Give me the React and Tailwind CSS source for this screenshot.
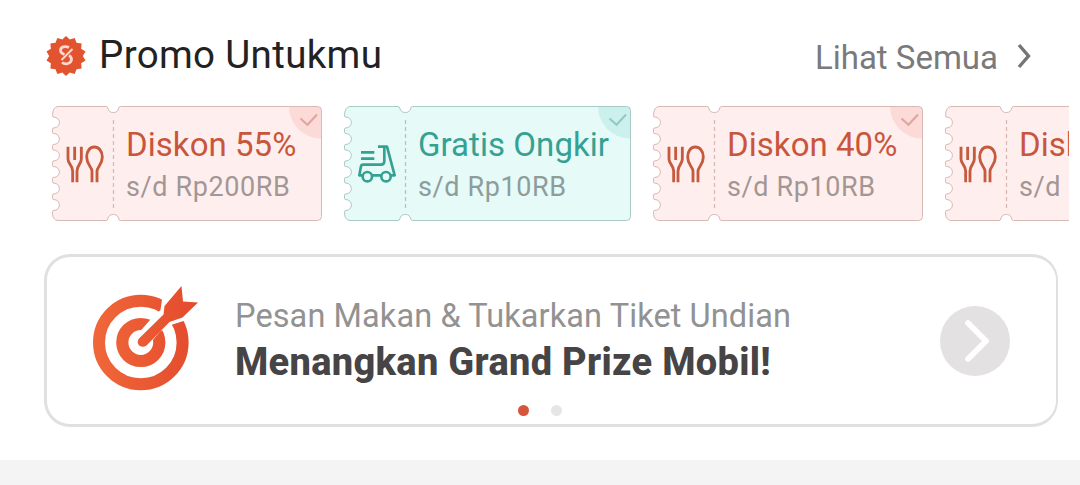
// src/pages/PromoSection.jsx

const vouchers = [
  { id: 1, type: 'food', title: 'Diskon 55%', subtitle: 's/d Rp200RB', width: 270 },
  { id: 2, type: 'delivery', title: 'Gratis Ongkir', subtitle: 's/d Rp10RB', width: 287 },
  { id: 3, type: 'food', title: 'Diskon 40%', subtitle: 's/d Rp10RB', width: 270 },
  { id: 4, type: 'food', title: 'Diskon 40%', subtitle: 's/d Rp10RB', width: 270 },
];

const themes = {
  food: { fill: '#feefee', border: '#d8b9b4', badge: '#fcdad7', check: '#dfa59f', title: 'text-[#c9563c]', subtitle: 'text-[#a39695]' },
  delivery: { fill: '#e6faf8', border: '#a9cbc7', badge: '#ccf0ed', check: '#93c9c3', title: 'text-[#35a193]', subtitle: 'text-[#8d9d9b]' },
};

// Ticket outline: scalloped left edge plus a notch at each end of the perforation
function ticketPath(width) {
  const r = width - 0.5;
  const bites = [99, 82.5, 66, 49.5, 33, 16.5]
    .map((y) => `V${y + 6.6} Q0.5 ${y + 5.4} 2 ${y + 5.4} A5.3 5.3 0 0 0 2 ${y - 5.4} Q0.5 ${y - 5.4} 0.5 ${y - 6.6}`)
    .join(' ');
  return `M6 0.5 H54 Q55.5 0.5 55.8 2 A5.6 5.6 0 0 0 66.8 2 Q67 0.5 68.5 0.5 H${r - 4} Q${r} 0.5 ${r} 4.5 V110.5 Q${r} 114.5 ${r - 4} 114.5 H68.5 Q67 114.5 66.8 113 A5.6 5.6 0 0 0 55.8 113 Q55.5 114.5 54 114.5 H6 Q0.5 114 0.5 107 ${bites} Q0.5 1 6 0.5 Z`;
}

function PromoBadge() {
  const points = Array.from({ length: 28 }, (_, i) => {
    const radius = i % 2 === 0 ? 20 : 16.8;
    const angle = (i * Math.PI) / 14 - Math.PI / 2;
    return `${20 + radius * Math.cos(angle)},${20 + radius * Math.sin(angle)}`;
  }).join(' ');
  return (
    <svg width="40" height="40" viewBox="0 0 40 40" fill="none">
      <polygon points={points} fill="#e2532f" />
      <path d="M23 11.5C19 9.5 14.5 11 14.5 14.5C14.5 16.5 16 17.5 18.5 18.5M23 19.5C25.5 21 25.8 23.5 24.8 25.5C23 28.5 18.5 28.5 16 26.5" stroke="#ffd9cf" strokeWidth="2.8" />
      <path d="M26.5 13L15.5 24" stroke="#ffd9cf" strokeWidth="2" />
    </svg>
  );
}

function CutleryIcon() {
  return (
    <svg width="38" height="38" viewBox="77 146 114 114" fill="none" stroke="#c65a3f" strokeWidth="8.5">
      <path d="M83 151V188C83 204 97 206 97 224V258M123 151V188C123 204 110 206 110 224V258M103 151V191" />
      <path d="M155 258V224C155 212 139 206 139 182C139 164 149 152 162 152S186 164 186 182C186 206 170 212 170 224V258" />
    </svg>
  );
}

function ScooterIcon() {
  return (
    <svg width="38" height="38" viewBox="66 146 114 114" fill="none" stroke="#35a193" strokeWidth="8">
      <path d="M75 168H115M75 187H115" />
      <path d="M126 151H153L176 237H165M145 151V195Q145 205 135 205H81Q76 205 75 210L70 237H79M109 237H135" strokeLinejoin="round" />
      <circle cx="94" cy="241" r="14" />
      <circle cx="150" cy="241" r="14" />
    </svg>
  );
}

function VoucherCard({ voucher }) {
  const theme = themes[voucher.type];
  const w = voucher.width;
  return (
    <div className="relative flex h-[115px] shrink-0" style={{ width: w }}>
      <svg className="absolute inset-0" width={w} height="115" viewBox={`0 0 ${w} 115`} fill="none">
        <path d={ticketPath(w)} fill={theme.fill} />
        <path d={`M${w - 33} 0.5 A32 32 0 0 0 ${w - 0.5} 32.5 V4.5 Q${w - 0.5} 0.5 ${w - 4.5} 0.5 Z`} fill={theme.badge} />
        <path d={ticketPath(w)} stroke={theme.border} />
        <path d="M61.5 14V102" stroke={theme.border} strokeWidth="1.3" strokeDasharray="4 3" />
        <path d={`M${w - 21.5} 12.5 L${w - 14.5} 18.8 L${w - 5} 8.5`} stroke={theme.check} strokeWidth="2" />
      </svg>
      <div className="relative flex w-[61px] justify-end pt-[39px] pr-[9px]">
        {voucher.type === 'food' ? <CutleryIcon /> : <ScooterIcon />}
      </div>
      <div className="relative pt-[19px] pl-[13px] whitespace-nowrap">
        <p className={`text-[33px] leading-[40px] tracking-[0.05px] ${theme.title}`}>{voucher.title}</p>
        <p className={`mt-[3px] text-[27px] leading-[38px] tracking-[0.6px] ${theme.subtitle}`}>{voucher.subtitle}</p>
      </div>
    </div>
  );
}

function TargetIcon() {
  return (
    <svg width="108" height="108" viewBox="0 0 108 108" fill="none">
      <defs>
        <linearGradient id="targetFill" x1="0" y1="0" x2="108" y2="0" gradientUnits="userSpaceOnUse">
          <stop offset="0" stopColor="#f0683a" />
          <stop offset="1" stopColor="#e34a2d" />
        </linearGradient>
      </defs>
      <circle cx="48.8" cy="56.5" r="41.8" stroke="url(#targetFill)" strokeWidth="12" />
      <circle cx="48.8" cy="56.5" r="18.5" stroke="url(#targetFill)" strokeWidth="12.2" />
      <path d="M44 50L58 34L68.5 24L70.5 10L92 -2L108 18L93 34.5L79 39L68 45.5L56 60Z" fill="#fff" />
      <path d="M47 52.5L71.5 28.5L72.5 20L89.5 0L91 15.5L106 16.5L90.5 31.5L77.5 36L54.5 59.5C49 63 43 58 47 52.5Z" fill="url(#targetFill)" />
    </svg>
  );
}

function PromoBanner() {
  return (
    <div className="ml-[44px] flex h-[173px] w-[1014px] flex-col rounded-[26px] border-3 border-r-2 border-[#e0e0e0]">
      <div className="flex h-[142px] items-start pt-[29px] pl-[45px]">
        <TargetIcon />
        <div className="ml-[35px] w-[705px] pt-[8px] whitespace-nowrap">
          <p className="text-[32.5px] leading-[44px] tracking-[0.1px] text-[#929292]">Pesan Makan &amp; Tukarkan Tiket Undian</p>
          <p className="mt-[2px] text-[38px] leading-[44px] font-extrabold tracking-[0.3px] text-[#464445]">Menangkan Grand Prize Mobil!</p>
        </div>
        <button className="mt-[20px] flex size-[70px] shrink-0 items-center justify-center rounded-full bg-[#e3e1e2]" aria-label="Buka promo">
          <svg width="70" height="70" viewBox="0 0 70 70" fill="none">
            <path d="M28 17L46 35L28 53" stroke="#fff" strokeWidth="5.8" strokeLinecap="round" strokeLinejoin="round" />
          </svg>
        </button>
      </div>
      <div className="flex gap-[22px] pt-[6px] pl-[471px]">
        <span className="size-[11px] rounded-full bg-[#d4573d]" />
        <span className="size-[11px] rounded-full bg-[#e6e6e6]" />
      </div>
    </div>
  );
}

function PromoSection() {
  return (
    <div className="flex h-[485px] w-[1080px] flex-col overflow-hidden bg-white font-['Roboto',sans-serif]">
      <header className="flex h-[106px] items-start pr-[48px] pl-[46px]">
        <div className="pt-[36px]">
          <PromoBadge />
        </div>
        <h1 className="ml-[13px] pt-[30px] text-[38.5px] leading-[50px] tracking-[0.35px] text-[#222222]">Promo Untukmu</h1>
        <a className="ml-auto flex items-center gap-[18px] pt-[35px] text-[33px] leading-[46px] text-[#7a7a7a]">
          <span>Lihat Semua</span>
          <svg className="mb-1" width="16" height="28" viewBox="0 0 16 28" fill="none">
            <path d="M3 3L12.5 14L3 25" stroke="#757575" strokeWidth="3.4" />
          </svg>
        </a>
      </header>

      <div className="ml-[52px] flex w-[1017px] gap-[22px] overflow-hidden">
        {vouchers.map((voucher) => (
          <VoucherCard key={voucher.id} voucher={voucher} />
        ))}
      </div>

      <div className="mt-[33px]">
        <PromoBanner />
      </div>

      <div className="mt-[33px] h-[25px] shrink-0 bg-[#f4f4f4]" />
    </div>
  );
}

export default PromoSection;
